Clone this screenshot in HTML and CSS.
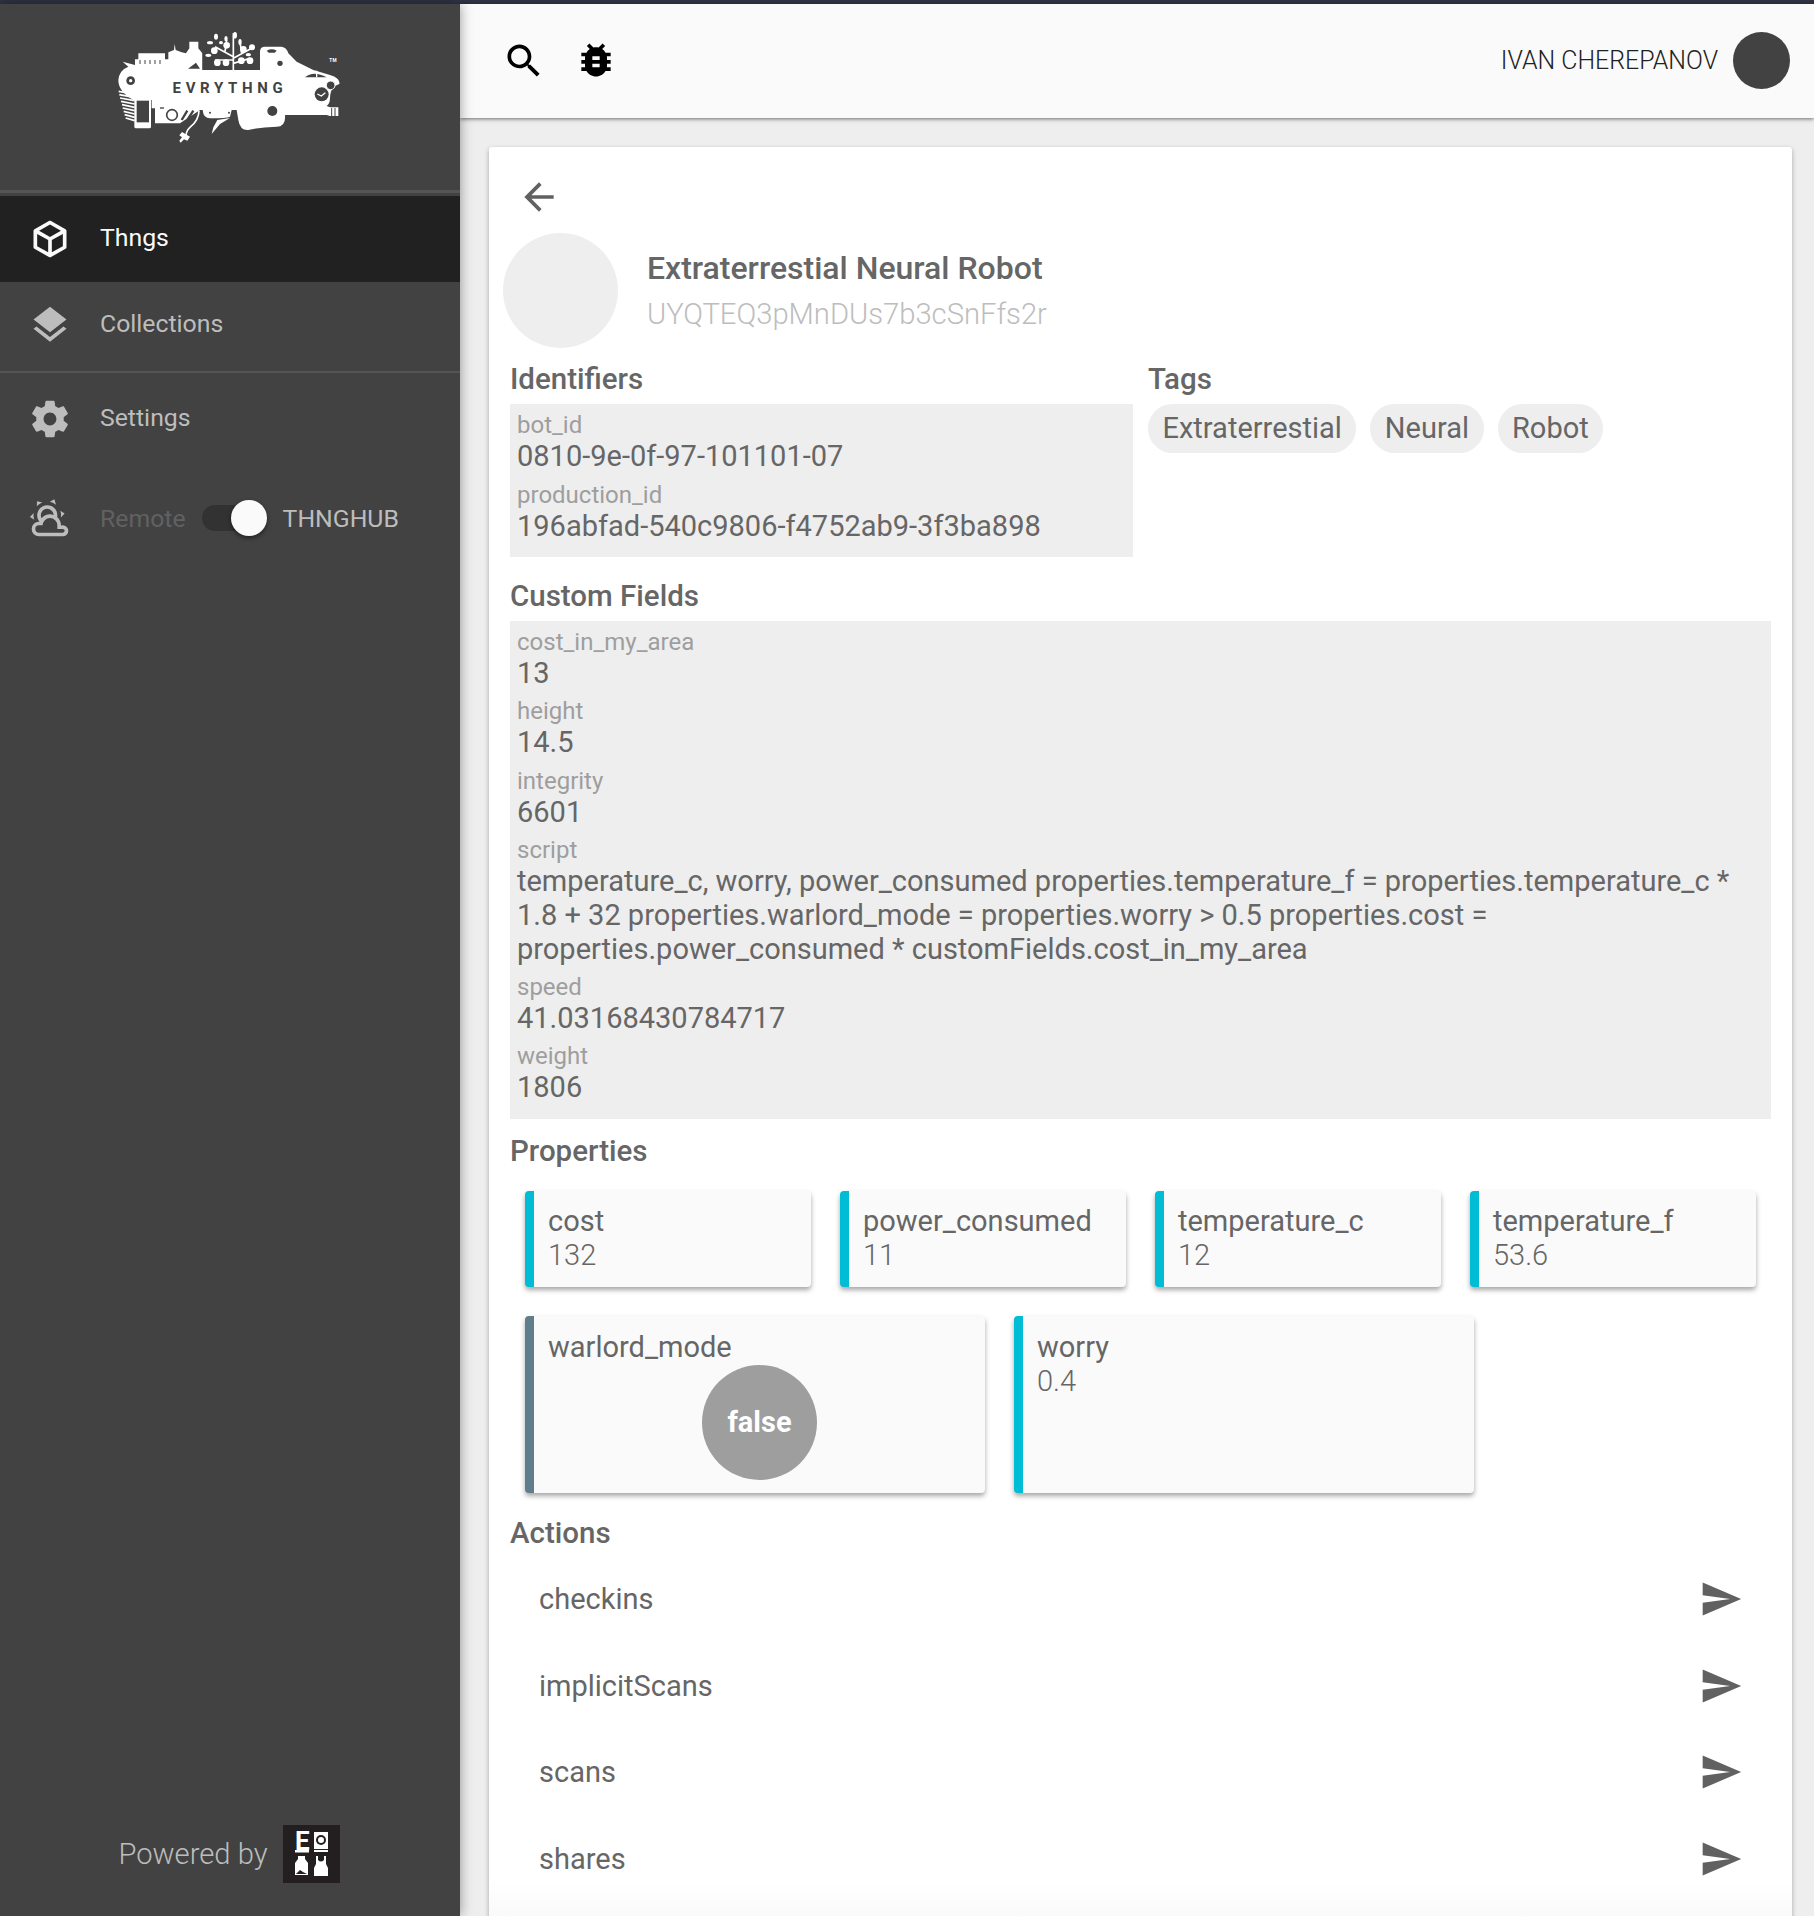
FILE: index.html
```html
<!DOCTYPE html>
<html lang="en">
<head>
<meta charset="utf-8">
<title>Extraterrestial Neural Robot</title>
<link rel="stylesheet" href="styles.css">
</head>
<body>
<div class="topline"></div>
<div class="app">
  <aside class="sidebar">
    <div class="brand">
      <svg class="logo" viewBox="0 0 780 390">
        <path class="w" d="M68 125L105 135V118H115V100H195V118H205V97L222 90L224 72L227 90L245 97L258 100L268 85V65H295V85L307 100V150H480V95Q480 80 495 80H545Q560 82 565 100L590 125L640 150L690 165Q722 175 718 192L700 200Q690 215 690 235Q690 250 680 258L690 262H715V288H690L680 285H555Q558 320 530 320Q480 322 445 330Q420 332 415 300L410 270H395L390 290Q380 295 330 295Q310 295 308 270H300L240 310H165V265H155V240H100Q55 215 55 180Q58 150 85 140Z"/>
        <rect class="w" x="103" y="235" width="50" height="90" rx="5"/>
        <rect class="d" x="110" y="242" width="37" height="65"/>
        <path class="stripes" d="M56 214L100 222M58 224L102 232M60 234L104 242M63 244L104 252M66 254L104 262M68 264L104 272M71 274L104 282M74 284L104 292M77 294L104 302"/>
        <circle class="d" cx="92" cy="182" r="13"/>
        <circle class="w" cx="92" cy="182" r="5"/>
        <path class="dline" d="M120 120V132M135 120V132M150 120V132M165 120V132M180 120V132"/>
        <path class="d" d="M264 146H300L288 128L278 136Z"/>
        <rect class="d" x="308" y="60" width="172" height="90"/>
        <path class="tree" d="M400 150V40M400 110L345 80M400 120L345 120M400 115L455 85M400 130L450 115M375 95L380 60M425 100L420 65"/>
        <g class="w">
          <circle cx="380" cy="76" r="10"/><circle cx="343" cy="92" r="10"/><circle cx="352" cy="128" r="10"/><circle cx="378" cy="128" r="10"/>
          <circle cx="424" cy="122" r="10"/><circle cx="450" cy="122" r="10"/><circle cx="430" cy="88" r="10"/><circle cx="456" cy="82" r="9"/>
          <ellipse cx="348" cy="50" rx="6" ry="9"/><ellipse cx="378" cy="56" rx="5" ry="8"/><ellipse cx="405" cy="46" rx="6" ry="10"/>
          <ellipse cx="330" cy="68" rx="9" ry="5"/><ellipse cx="325" cy="106" rx="9" ry="5"/><ellipse cx="420" cy="66" rx="5" ry="9"/><ellipse cx="363" cy="68" rx="6" ry="5"/><ellipse cx="445" cy="104" rx="8" ry="5"/>
        </g>
        <path class="d" d="M500 92Q515 84 530 92L524 98H506Z"/>
        <circle class="d" cx="540" cy="130" r="8"/>
        <path class="d" d="M615 172Q640 150 680 172Z"/>
        <path class="wline" d="M650 152V172"/>
        <circle class="d" cx="517" cy="273" r="15"/>
        <circle class="d" cx="665" cy="223" r="21"/>
        <path class="clockhands" d="M652 222L664 228L676 218"/>
        <circle class="ring" cx="692" cy="196" r="13"/>
        <rect class="d" x="180" y="262" width="12" height="4"/>
        <circle class="lens" cx="216" cy="285" r="16"/>
        <path class="dwide" d="M245 300L262 272M262 300L280 272"/>
        <path class="wire" d="M297 272Q296 300 272 320Q260 330 258 345"/>
        <path class="w" d="M246 336L270 350L262 362L252 358L242 368L238 362L246 352L238 346Z"/>
        <path class="w" d="M390 294L360 312L335 342L340 322L352 300Z"/>
        <circle class="d" cx="330" cy="278" r="3"/><circle class="d" cx="387" cy="278" r="3"/>
        <path class="dline" d="M695 264V288M705 264V288"/>
        <text class="logotext" x="390" y="218" text-anchor="middle">EVRYTHNG</text>
        <text class="tm" x="688" y="126">TM</text>
      </svg>
    </div>
    <nav class="nav">
      <a class="nav-item active">
        <svg class="icon" viewBox="0 0 24 24"><path d="M21,16.5C21,16.88 20.79,17.21 20.47,17.38L12.57,21.82C12.41,21.94 12.21,22 12,22C11.79,22 11.59,21.94 11.43,21.82L3.53,17.38C3.21,17.21 3,16.88 3,16.5V7.5C3,7.12 3.21,6.79 3.53,6.62L11.43,2.18C11.59,2.06 11.79,2 12,2C12.21,2 12.41,2.06 12.57,2.18L20.47,6.62C20.79,6.79 21,7.12 21,7.5V16.5M12,4.15L6.04,7.5L12,10.85L17.96,7.5L12,4.15M5,15.91L11,19.29V12.58L5,9.21V15.91M19,15.91V9.21L13,12.58V19.29L19,15.91Z"/></svg>
        <span class="lift">Thngs</span>
      </a>
      <a class="nav-item">
        <svg class="icon" viewBox="0 0 24 24"><path d="M11.99 18.54l-7.37-5.73L3 14.07l9 7 9-7-1.63-1.27-7.38 5.74zM12 16l7.36-5.73L21 9l-9-7-9 7 1.63 1.27L12 16z"/></svg>
        <span class="lift">Collections</span>
      </a>
      <div class="nav-divider"></div>
      <a class="nav-item">
        <svg class="icon" viewBox="0 0 24 24"><path d="M19.43 12.98c.04-.32.07-.64.07-.98s-.03-.66-.07-.98l2.11-1.65c.19-.15.24-.42.12-.64l-2-3.46c-.12-.22-.39-.3-.61-.22l-2.49 1c-.52-.4-1.08-.73-1.69-.98l-.38-2.65C14.46 2.18 14.25 2 14 2h-4c-.25 0-.46.18-.49.42l-.38 2.65c-.61.25-1.17.59-1.69.98l-2.49-1c-.23-.09-.49 0-.61.22l-2 3.46c-.13.22-.07.49.12.64l2.11 1.65c-.04.32-.07.65-.07.98s.03.66.07.98l-2.11 1.65c-.19.15-.24.42-.12.64l2 3.46c.12.22.39.3.61.22l2.49-1c.52.4 1.08.73 1.69.98l.38 2.65c.03.24.24.42.49.42h4c.25 0 .46-.18.49-.42l.38-2.65c.61-.25 1.17-.59 1.69-.98l2.49 1c.23.09.49 0 .61-.22l2-3.46c.12-.22.07-.49-.12-.64l-2.11-1.65zM12 15.5c-1.93 0-3.5-1.57-3.5-3.5s1.57-3.5 3.5-3.5 3.5 1.57 3.5 3.5-1.57 3.5-3.5 3.5z"/></svg>
        <span class="lift-small">Settings</span>
      </a>
      <div class="nav-item remote">
        <svg class="icon" viewBox="0 0 24 24"><path d="M12.74,5.47C15.1,6.5 16.35,9.03 15.92,11.46C17.19,12.56 18,14.19 18,16V16.17C18.31,16.06 18.65,16 19,16A3,3 0 0,1 22,19A3,3 0 0,1 19,22H6A4,4 0 0,1 2,18A4,4 0 0,1 6,14H6.27C5,12.45 4.6,10.24 5.5,8.26C6.72,5.5 9.97,4.24 12.74,5.47M11.93,7.3C10.16,6.5 8.09,7.31 7.31,9.07C6.85,10.09 6.93,11.25 7.41,12.18C8.5,10.83 10.16,10 12,10C12.7,10 13.38,10.12 14,10.34C13.94,9.06 13.18,7.86 11.93,7.3M13.55,3.64C13,3.4 12.45,3.23 11.88,3.12L14.37,1.82L15.27,4.71C14.76,4.29 14.19,3.93 13.55,3.64M6.09,4.44C5.6,4.79 5.17,5.19 4.8,5.63L4.91,2.82L7.87,3.5C7.25,3.71 6.65,4.03 6.09,4.44M18,9.71C17.91,9.12 17.78,8.55 17.59,8L19.97,9.5L17.92,11.73C18.03,11.08 18.05,10.4 18,9.71M3.04,11.3C3.11,11.9 3.24,12.47 3.43,13L1.06,11.5L3.1,9.28C3,9.93 2.97,10.61 3.04,11.3M19,18H16V16A4,4 0 0,0 12,12A4,4 0 0,0 8,16H6A2,2 0 0,0 4,18A2,2 0 0,0 6,20H19A1,1 0 0,0 20,19A1,1 0 0,0 19,18Z"/></svg>
        <span class="remote-label">Remote</span>
        <span class="toggle"><span class="toggle-track"></span><span class="toggle-knob"></span></span>
        <span class="hub-label">THNGHUB</span>
      </div>
    </nav>
    <div class="powered">
      <span>Powered by</span>
      <svg class="powered-logo" viewBox="0 0 57 58">
        <rect class="ink" width="57" height="58"/>
        <text class="ptext" x="12" y="25">E</text>
        <rect class="w" x="12" y="25" width="14" height="2.5"/>
        <rect class="w" x="31" y="7" width="14" height="17"/>
        <rect class="w" x="31" y="25" width="14" height="2"/>
        <circle class="ink" cx="38" cy="15" r="5"/>
        <circle class="w" cx="38" cy="15" r="3"/>
        <path class="w" d="M15 31H22V34L25 38V50H12V38L15 34Z"/>
        <path class="ink" d="M13 49L17 45L20 47L24 49Z"/>
        <path class="w" d="M33 31H35V35Q38 38 41 35V31H43V39L45 43V51H31V43L33 39Z"/>
      </svg>
    </div>
  </aside>
  <div class="main">
    <header class="topbar">
      <svg class="icon tool first" viewBox="0 0 24 24"><path d="M15.5 14h-.79l-.28-.27C15.41 12.59 16 11.11 16 9.5 16 5.91 13.09 3 9.5 3S3 5.91 3 9.5 5.91 16 9.5 16c1.61 0 3.09-.59 4.23-1.57l.27.28v.79l5 4.99L20.49 19l-4.99-5zm-6 0C7.01 14 5 11.99 5 9.5S7.01 5 9.5 5 14 7.01 14 9.5 11.99 14 9.5 14z"/></svg>
      <svg class="icon tool bug" viewBox="0 0 24 24"><path d="M20 8h-2.81c-.45-.78-1.07-1.45-1.82-1.96L17 4.41 15.59 3l-2.17 2.17C12.96 5.06 12.49 5 12 5c-.49 0-.96.06-1.41.17L8.41 3 7 4.41l1.62 1.63C7.88 6.55 7.26 7.22 6.81 8H4v2h2.09c-.05.33-.09.66-.09 1v1H4v2h2v1c0 .34.04.67.09 1H4v2h2.81c1.04 1.79 2.97 3 5.19 3s4.15-1.21 5.19-3H20v-2h-2.09c.05-.33.09-.66.09-1v-1h2v-2h-2v-1c0-.34-.04-.67-.09-1H20V8zm-6 8h-4v-2h4v2zm0-4h-4v-2h4v2z"/></svg>
      <span class="user">IVAN CHEREPANOV</span>
      <span class="user-avatar"></span>
    </header>
    <div class="content">
      <section class="card">
        <svg class="icon back" viewBox="0 0 24 24"><path d="M20 11H7.83l5.59-5.59L12 4l-8 8 8 8 1.41-1.41L7.83 13H20v-2z"/></svg>
        <div class="identity">
          <div class="thng-avatar"></div>
          <div>
            <div class="title">Extraterrestial Neural Robot</div>
            <div class="subtitle">UYQTEQ3pMnDUs7b3cSnFfs2r</div>
          </div>
        </div>
        <div class="cols">
          <div>
            <h2 class="heading">Identifiers</h2>
            <dl class="fields id-fields">
              <dt>bot_id</dt><dd>0810-9e-0f-97-101101-07</dd>
              <dt>production_id</dt><dd>196abfad-540c9806-f4752ab9-3f3ba898</dd>
            </dl>
          </div>
          <div>
            <h2 class="heading">Tags</h2>
            <div class="chips">
              <span class="chip">Extraterrestial</span>
              <span class="chip">Neural</span>
              <span class="chip">Robot</span>
            </div>
          </div>
        </div>
        <h2 class="heading custom-heading">Custom Fields</h2>
        <dl class="fields custom-fields">
          <dt>cost_in_my_area</dt><dd>13</dd>
          <dt>height</dt><dd>14.5</dd>
          <dt>integrity</dt><dd>6601</dd>
          <dt>script</dt><dd>temperature_c, worry, power_consumed properties.temperature_f = properties.temperature_c * 1.8 + 32 properties.warlord_mode = properties.worry &gt; 0.5 properties.cost = properties.power_consumed * customFields.cost_in_my_area</dd>
          <dt>speed</dt><dd>41.03168430784717</dd>
          <dt>weight</dt><dd>1806</dd>
        </dl>
        <h2 class="heading props-heading">Properties</h2>
        <div class="props">
          <div class="prop"><div class="prop-name">cost</div><div class="prop-value">132</div></div>
          <div class="prop"><div class="prop-name">power_consumed</div><div class="prop-value">11</div></div>
          <div class="prop"><div class="prop-name">temperature_c</div><div class="prop-value">12</div></div>
          <div class="prop"><div class="prop-name">temperature_f</div><div class="prop-value">53.6</div></div>
          <div class="prop wide bool"><div class="prop-name">warlord_mode</div><div class="bool-badge">false</div></div>
          <div class="prop wide"><div class="prop-name">worry</div><div class="prop-value">0.4</div></div>
        </div>
        <h2 class="heading actions-heading">Actions</h2>
        <ul class="actions">
          <li class="action"><span>checkins</span><svg class="icon" viewBox="0 0 24 24"><path d="M2.01 21L23 12 2.01 3 2 10l15 2-15 2z"/></svg></li>
          <li class="action"><span>implicitScans</span><svg class="icon" viewBox="0 0 24 24"><path d="M2.01 21L23 12 2.01 3 2 10l15 2-15 2z"/></svg></li>
          <li class="action"><span>scans</span><svg class="icon" viewBox="0 0 24 24"><path d="M2.01 21L23 12 2.01 3 2 10l15 2-15 2z"/></svg></li>
          <li class="action"><span>shares</span><svg class="icon" viewBox="0 0 24 24"><path d="M2.01 21L23 12 2.01 3 2 10l15 2-15 2z"/></svg></li>
        </ul>
      </section>
    </div>
  </div>
</div>
</body>
</html>
```

FILE: styles.css
```css
* { box-sizing: border-box; }
html, body { margin: 0; padding: 0; height: 1916px; overflow: hidden; }
body { font-family: Roboto, "Liberation Sans", sans-serif; background: #eeeeee; color: #666666; }
h2, dl, dd, ul { margin: 0; padding: 0; }
ul { list-style: none; }

.topline { height: 4px; background: #2f3344; }
.app { display: flex; height: 1912px; }

/* sidebar */
.sidebar { width: 460px; flex: none; display: flex; flex-direction: column; background: #424242; box-shadow: 0 0 12px rgba(0,0,0,.4); position: relative; z-index: 2; }
.brand { height: 186px; padding-top: 16px; display: flex; justify-content: center; align-items: flex-start; }
.logo { width: 260px; height: 130px; display: block; }
.w { fill: #fff; }
.d { fill: #424242; }
.ink { fill: #231f20; }
.stripes { stroke: #fff; stroke-width: 5; fill: none; }
.dline { stroke: #424242; stroke-width: 3; fill: none; }
.wline { stroke: #fff; stroke-width: 4; fill: none; }
.dwide { stroke: #424242; stroke-width: 7; fill: none; }
.tree { stroke: #fff; stroke-width: 5; fill: none; }
.clockhands { stroke: #fff; stroke-width: 4; fill: none; }
.ring { fill: #424242; stroke: #fff; stroke-width: 3; }
.lens { fill: #fff; stroke: #424242; stroke-width: 5; }
.wire { stroke: #fff; stroke-width: 5; fill: none; }
.logotext { font-family: Roboto, sans-serif; font-weight: 700; font-size: 45px; letter-spacing: 14px; fill: #424242; }
.tm { font-family: Roboto, sans-serif; font-weight: 700; font-size: 14px; letter-spacing: 1px; fill: #fff; }
.ptext { font-family: Roboto, sans-serif; font-weight: 700; font-size: 26px; fill: #fff; }

.nav { border-top: 3px solid #555555; padding-top: 3px; }
.nav-item { height: 86px; display: flex; align-items: center; padding-left: 28px; font-size: 24.8px; color: #bdbdbd; }
.nav-item .icon { fill: #bdbdbd; margin-right: 28px; }
.nav-item.active { background: #212121; color: #fafafa; }
.nav-item.active .icon { fill: #fafafa; }
.lift { margin-bottom: 4px; }
.lift-small { margin-bottom: 3px; }
.nav-divider { height: 2px; margin: 3px 0 3px; background: #555555; }
.remote { margin-top: 13px; }
.remote-label { color: #616161; }
.hub-label { margin-left: 16px; }
.toggle { width: 65px; height: 36px; margin-left: 16px; display: flex; align-items: center; position: relative; }
.toggle-track { width: 52px; height: 26px; border-radius: 13px; background: #323232; }
.toggle-knob { position: absolute; right: 0; top: 0; width: 36px; height: 36px; border-radius: 50%; background: #fafafa; box-shadow: 0 2px 4px rgba(0,0,0,.5); }
.icon { width: 44px; height: 44px; flex: none; display: block; fill: #616161; }

.powered { margin-top: auto; padding: 0 2px 33px 0; display: flex; justify-content: center; align-items: center; gap: 15px; font-size: 29.2px; font-weight: 300; color: #bdbdbd; }
.powered-logo { width: 57px; height: 58px; display: block; }

/* main */
.main { flex: 1; min-width: 0; display: flex; flex-direction: column; }
.topbar { height: 114px; flex: none; display: flex; align-items: center; padding: 0 24px 0 42px; background: #fafafa; box-shadow: 0 1px 4px rgba(0,0,0,.55); position: relative; z-index: 1; }
.tool { fill: #000; margin-right: 28px; }
.bug { margin-bottom: 2px; }
.user { margin-left: auto; margin-bottom: 2px; font-size: 24.9px; font-weight: 300; color: #212121; }
.user-avatar { width: 57px; height: 57px; margin: 0 0 2px 15px; border-radius: 50%; background: #424242; }

.content { flex: 1; padding: 29px 22px 0 29px; min-height: 0; }
.card { height: 1800px; padding: 28px 21px 0 14px; background: #fff; border-radius: 3px; box-shadow: 0 2px 5px rgba(0,0,0,.3); position: relative; }
.back { margin-left: 14px; }
.identity { margin-top: 14px; display: flex; align-items: center; gap: 29px; }
.thng-avatar { width: 115px; height: 115px; border-radius: 50%; background: #eeeeee; }
.title { margin-top: 1px; font-size: 32px; font-weight: 500; line-height: 44px; }
.subtitle { padding-top: 1px; font-size: 29.2px; line-height: 46px; font-weight: 300; color: #bdbdbd; }
.cols { display: grid; grid-template-columns: 623px 1fr; column-gap: 15px; margin: 14.4px 0 0 7px; }
.heading { font-size: 29.5px; font-weight: 500; line-height: 35px; margin-bottom: 6.8px; }
.fields { background: #eeeeee; padding: 7px 7px 0; }
.fields dt { font-size: 24px; line-height: 28px; color: #9e9e9e; }
.fields dd { font-size: 29px; line-height: 34px; color: #666666; margin-bottom: 7.3px; }
.id-fields { height: 153px; }
.id-fields dd { margin-bottom: 8px; }
.chips { display: flex; gap: 14px; }
.chip { height: 49px; padding: 0 14.5px 2px; display: flex; align-items: center; border-radius: 25px; background: #eeeeee; font-size: 29px; }
.custom-heading { margin: 22px 0 6.8px 7px; }
.custom-fields { height: 498px; margin-left: 7px; }
.props-heading { margin: 15.2px 0 0 7px; }
.props { display: flex; flex-wrap: wrap; gap: 29px; margin: 22px 0 0 22px; }
.prop { width: 286px; padding: 12.5px 10px 15.5px 14px; border-left: 9px solid #00bcd4; border-radius: 4px; background: #fafafa; box-shadow: 0 3px 5px rgba(0,0,0,.35); }
.prop.wide { width: 460px; padding: 14px 10px 13px 14px; }
.prop.bool { border-left-color: #607d8b; }
.prop-name { font-size: 29px; line-height: 34px; }
.prop-value { font-size: 29px; font-weight: 300; line-height: 34px; }
.bool-badge { width: 115px; height: 115px; margin: 1px 0 0 154px; padding-bottom: 2px; border-radius: 50%; display: flex; align-items: center; justify-content: center; background: #9e9e9e; color: #fff; font-size: 29px; font-weight: 700; }
.actions-heading { margin: 22.5px 0 5px 7px; }
.actions { margin-left: 7px; }
.action { height: 86.6px; display: flex; align-items: center; justify-content: space-between; padding: 0 28px 0 29px; font-size: 29px; }
.card::after { content: ""; position: absolute; left: 0; right: 0; top: 1735px; height: 34px; background: linear-gradient(to bottom, rgba(250,250,250,0), #fafafa); }
```
